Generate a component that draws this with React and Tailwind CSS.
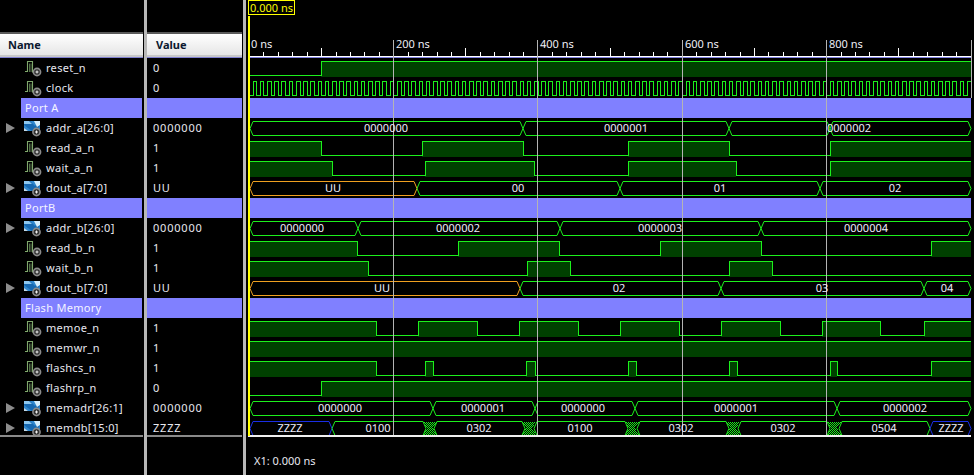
const T = (k) => 61 + k * 20;
const GREEN = '#1cf01c';
const ORANGE = '#f0a020';
const BLUE = '#1a2ee6';
const END = 971;

const names = [
  { name: 'reset_n', value: '0' },
  { name: 'clock', value: '0' },
  { group: 'Port A' },
  { name: 'addr_a[26:0]', value: '0000000', bus: true },
  { name: 'read_a_n', value: '1' },
  { name: 'wait_a_n', value: '1' },
  { name: 'dout_a[7:0]', value: 'UU', bus: true },
  { group: 'PortB' },
  { name: 'addr_b[26:0]', value: '0000000', bus: true },
  { name: 'read_b_n', value: '1' },
  { name: 'wait_b_n', value: '1' },
  { name: 'dout_b[7:0]', value: 'UU', bus: true },
  { group: 'Flash Memory' },
  { name: 'memoe_n', value: '1' },
  { name: 'memwr_n', value: '1' },
  { name: 'flashcs_n', value: '1' },
  { name: 'flashrp_n', value: '0' },
  { name: 'memadr[26:1]', value: '0000000', bus: true },
  { name: 'memdb[15:0]', value: 'ZZZZ', bus: true },
];

// start level, then x of every toggle
const digital = [
  { row: 0, high: false, edges: [321] },
  { row: 4, high: true, edges: [321, 422, 523, 628, 729, 830] },
  { row: 5, high: true, edges: [332, 425, 534, 628, 736, 830] },
  { row: 9, high: true, edges: [357, 458, 559, 660, 761, 931] },
  { row: 10, high: true, edges: [368, 527, 570, 729, 772] },
  { row: 13, high: true, edges: [376, 418, 477, 519, 578, 620, 679, 721, 780, 822, 880, 924] },
  { row: 14, high: true, edges: [] },
  { row: 15, high: true, edges: [376, 425, 433, 526, 535, 628, 636, 729, 737, 830, 837, 931] },
  { row: 16, high: false, edges: [321] },
];

const buses = [
  { row: 3, segs: [[250, 523, '0000000', 386], [523, 729, '0000001', 626], [729, 830, '', 0], [830, END, '0000002', 849]] },
  { row: 6, segs: [[250, 417, 'UU', 333, ORANGE], [417, 620, '00', 518], [620, 820, '01', 720], [820, END, '02', 895]] },
  { row: 8, segs: [[250, 358, '0000000', 302], [358, 560, '0000002', 458], [560, 761, '0000003', 660], [761, END, '0000004', 866]] },
  { row: 11, segs: [[250, 520, 'UU', 382, ORANGE], [520, 721, '02', 619], [721, 924, '03', 822], [924, END, '04', 947]] },
  { row: 17, segs: [[250, 433, '0000000', 340], [433, 535, '0000001', 483], [535, 635, '0000000', 583], [635, 837, '0000001', 736], [837, END, '0000002', 905]] },
  { row: 18, segs: [[250, 332, 'ZZZZ', 290, BLUE], [332, 426, '0100', 378], [434, 525, '0302', 479], [534, 628, '0100', 580], [637, 729, '0302', 681], [738, 830, '0302', 783], [839, 930, '0504', 884], [930, END, 'ZZZZ', 951, BLUE]] },
];

const hatches = [424, 523, 626, 727, 828];

const digitalPath = (row, high, edges) => {
  const top = T(row) + 0.5;
  const bot = T(row) + 14.5;
  let level = high;
  let x = 250;
  let line = `M250 ${level ? top : bot}`;
  const fills = [];
  [...edges, END].forEach((e) => {
    if (level) fills.push([x, e]);
    line += ` H${e}`;
    if (e !== END) {
      level = !level;
      line += ` V${level ? top : bot}`;
    }
    x = e;
  });
  return { line, fills };
};

const clockPath = () => {
  const top = T(1) + 0.5;
  const bot = T(1) + 14.5;
  let d = `M250 ${bot}`;
  for (let t = 5; t < 1000; t += 10) {
    const a = Math.round(249 + t * 0.7215);
    const b = Math.min(Math.round(249 + (t + 5) * 0.7215), END);
    d += ` H${a} V${top} H${b} V${bot}`;
  }
  return d + ` H${END}`;
};

const busPath = (row, a, b) => {
  const top = T(row) + 0.5;
  const bot = T(row) + 14.5;
  const mid = T(row) + 7.5;
  return `M${a} ${mid} L${a + 3} ${top} H${b - 3} L${b} ${mid} L${b - 3} ${bot} H${a + 3} Z`;
};

const ticks = [];
for (let i = 1; i < 50; i++) ticks.push(i);

function Knob({ cx }) {
  return (
    <>
      <circle cx={cx} cy="13" r="4.4" fill="#8c8c8c" />
      <circle cx={cx} cy="13" r="2.8" fill="#303030" />
      <path d={`M${cx - 1.5} 13H${cx + 1.5}M${cx} 11.5V14.5`} stroke="#f0f0f0" strokeWidth="1" />
    </>
  );
}

function WireIcon() {
  return (
    <svg width="18" height="18" viewBox="0 0 18 18" className="shrink-0">
      <path d="M1 12.5H3.5V2.5H8.5V13H11" fill="none" stroke="#7fa86c" strokeWidth="1.1" />
      <path d="M5.5 13V4.5M7 13V4.5" fill="none" stroke="#55704a" strokeWidth="1" />
      <Knob cx={13} />
    </svg>
  );
}

function BusIcon() {
  return (
    <svg width="18" height="18" viewBox="0 0 18 18" className="shrink-0">
      <rect x="0" y="2" width="16" height="10" fill="#2f86cc" />
      <path d="M0 2H6L11 7L16 2V7L11 12H8L0 6Z" fill="#1768b0" />
      <path d="M10 2H16V6L13 8Z" fill="#d6eefc" />
      <path d="M0 2H5L8 5H0Z" fill="#8cc6ee" />
      <path d="M0 9L4 12H0Z" fill="#c4d8e6" />
      <Knob cx={12.5} />
    </svg>
  );
}

function NameRow({ row }) {
  if (row.group) {
    return (
      <div className="h-5 flex items-center pl-[21px]">
        <div className="w-[121px] h-5 bg-[#8080ff] pl-1 text-[#f4f4ff] leading-5 tracking-[0.3px]">{row.group}</div>
      </div>
    );
  }
  return (
    <div className="h-5 flex items-center text-[#e8e8f0] tracking-[0.3px]">
      <div className="w-[24px] pl-[6px] shrink-0">
        {row.bus && <div className="w-0 h-0 border-y-[5px] border-y-transparent border-l-[9px] border-l-[#8c8c8c]" />}
      </div>
      {row.bus ? <BusIcon /> : <WireIcon />}
      <span className="ml-[4px] whitespace-nowrap">{row.name}</span>
    </div>
  );
}

function Column({ width, title, titlePad, children }) {
  return (
    <div className={`${width} shrink-0 flex flex-col`}>
      <div className="h-[32px]" />
      <div className="h-[2px] bg-[#5a5a5a]" />
      <div className={`h-[23px] pt-[2px] bg-gradient-to-b from-white to-[#e6e6e6] border-b-2 border-[#c8c8c8] flex items-center ${titlePad} font-bold text-[#0c1830]`}>
        {title}
      </div>
      <div className="h-px bg-[#8080d0]" />
      <div className="h-[377px] overflow-hidden">{children}</div>
      <div className="h-[2px] bg-[#8a8a8a]" />
    </div>
  );
}

function Waves() {
  return (
    <svg width="728" height="438" viewBox="246 0 728 438" className="block" shapeRendering="crispEdges">
      <defs>
        <pattern id="hatch" width="2" height="2" patternUnits="userSpaceOnUse">
          <rect width="1" height="1" fill={GREEN} />
          <rect x="1" y="1" width="1" height="1" fill={GREEN} />
        </pattern>
      </defs>

      {/* ruler */}
      <rect x="250" y="56" width="722" height="1" fill="#ffffff" />
      <rect x="250" y="57" width="722" height="1" fill="#8080e0" />
      {ticks.map((i) => {
        const x = Math.round(249 + i * 14.43);
        return i % 10 === 0 ? null : (
          <rect key={i} x={x} y={i % 5 === 0 ? 48 : 52} width="1" height={i % 5 === 0 ? 8 : 4} fill="#ffffff" />
        );
      })}
      {[['0 ns', 251], ['200 ns', 396], ['400 ns', 540], ['600 ns', 685], ['800 ns', 829]].map(([s, x]) => (
        <text key={s} x={x} y="48" className="fill-[#f0f0f8] text-[11px]" textRendering="geometricPrecision">{s}</text>
      ))}

      {/* group bands */}
      {[2, 7, 12].map((k) => (
        <rect key={k} x="250" y={58 + k * 20} width="721" height="20" fill="#8080ff" />
      ))}

      {/* digital signals */}
      {digital.map(({ row, high, edges }) => {
        const { line, fills } = digitalPath(row, high, edges);
        return (
          <g key={row}>
            {fills.map(([a, b]) => (
              <rect key={a} x={a} y={T(row)} width={b - a} height="16" fill="#004000" />
            ))}
            <path d={line} fill="none" stroke={GREEN} />
          </g>
        );
      })}
      <path d={clockPath()} fill="none" stroke={GREEN} />

      {/* buses */}
      {buses.map(({ row, segs }) =>
        segs.map(([a, b, , , color]) => (
          <path key={`${row}-${a}`} d={busPath(row, a, b)} fill="none" stroke={color || GREEN} shapeRendering="auto" />
        ))
      )}
      {hatches.map((x) => (
        <path key={x} d={`M${x - 1} ${T(18) + 1} H${x + 13} L${x + 9} ${T(18) + 7} L${x + 13} 435 H${x - 1} L${x + 3} ${T(18) + 7} Z`} fill="url(#hatch)" />
      ))}

      {/* grid */}
      {[393, 537, 682, 826].map((x) => (
        <rect key={x} x={x} y="40" width="1" height="396" fill="#b4b4b4" />
      ))}
      <rect x="971" y="40" width="1" height="58" fill="#b4b4b4" />
      <rect x="248" y="435" width="723" height="2" fill="#f0f0f0" />

      {/* bus values */}
      {buses.map(({ row, segs }) =>
        segs.map(([a, , label, cx]) =>
          label ? (
            <text key={`${row}-${a}`} x={cx} y={T(row) + 11} textAnchor="middle" className="fill-[#f0f0ff] text-[11px]" textRendering="geometricPrecision">
              {label}
            </text>
          ) : null
        )
      )}

      {/* cursor */}
      <rect x="248" y="16" width="2" height="420" fill="#ffff00" />
      <rect x="248.5" y="0.5" width="46" height="14" fill="none" stroke="#ffff00" />
      <text x="250" y="11.5" className="fill-[#ffff00] text-[11px]" textRendering="geometricPrecision">0.000 ns</text>
    </svg>
  );
}

export default function App() {
  return (
    <div className="w-[974px] h-[475px] bg-black flex overflow-hidden text-[11px] font-['Noto_Sans',sans-serif]">
      <Column width="w-[143px]" title="Name" titlePad="pl-[8px]">
        {names.map((r) => (
          <NameRow key={r.name || r.group} row={r} />
        ))}
      </Column>
      <div className="w-px shrink-0" />
      <div className="w-[3px] shrink-0 bg-[#b8b8b8]" />
      <Column width="w-[95px]" title="Value" titlePad="pl-[9px]">
        {names.map((r) => (
          <div key={r.name || r.group} className={`h-5 leading-5 pl-[6px] text-[#e8e8f0] tracking-[0.8px] ${r.group ? 'bg-[#8080ff]' : ''}`}>
            {r.value}
          </div>
        ))}
      </Column>
      <div className="w-px shrink-0" />
      <div className="w-[3px] shrink-0 bg-[#b8b8b8]" />
      <div className="flex-1 flex flex-col">
        <Waves />
        <div className="pl-[8px] pt-[15px] text-[#e8e8f0]">X1: 0.000 ns</div>
      </div>
    </div>
  );
}
